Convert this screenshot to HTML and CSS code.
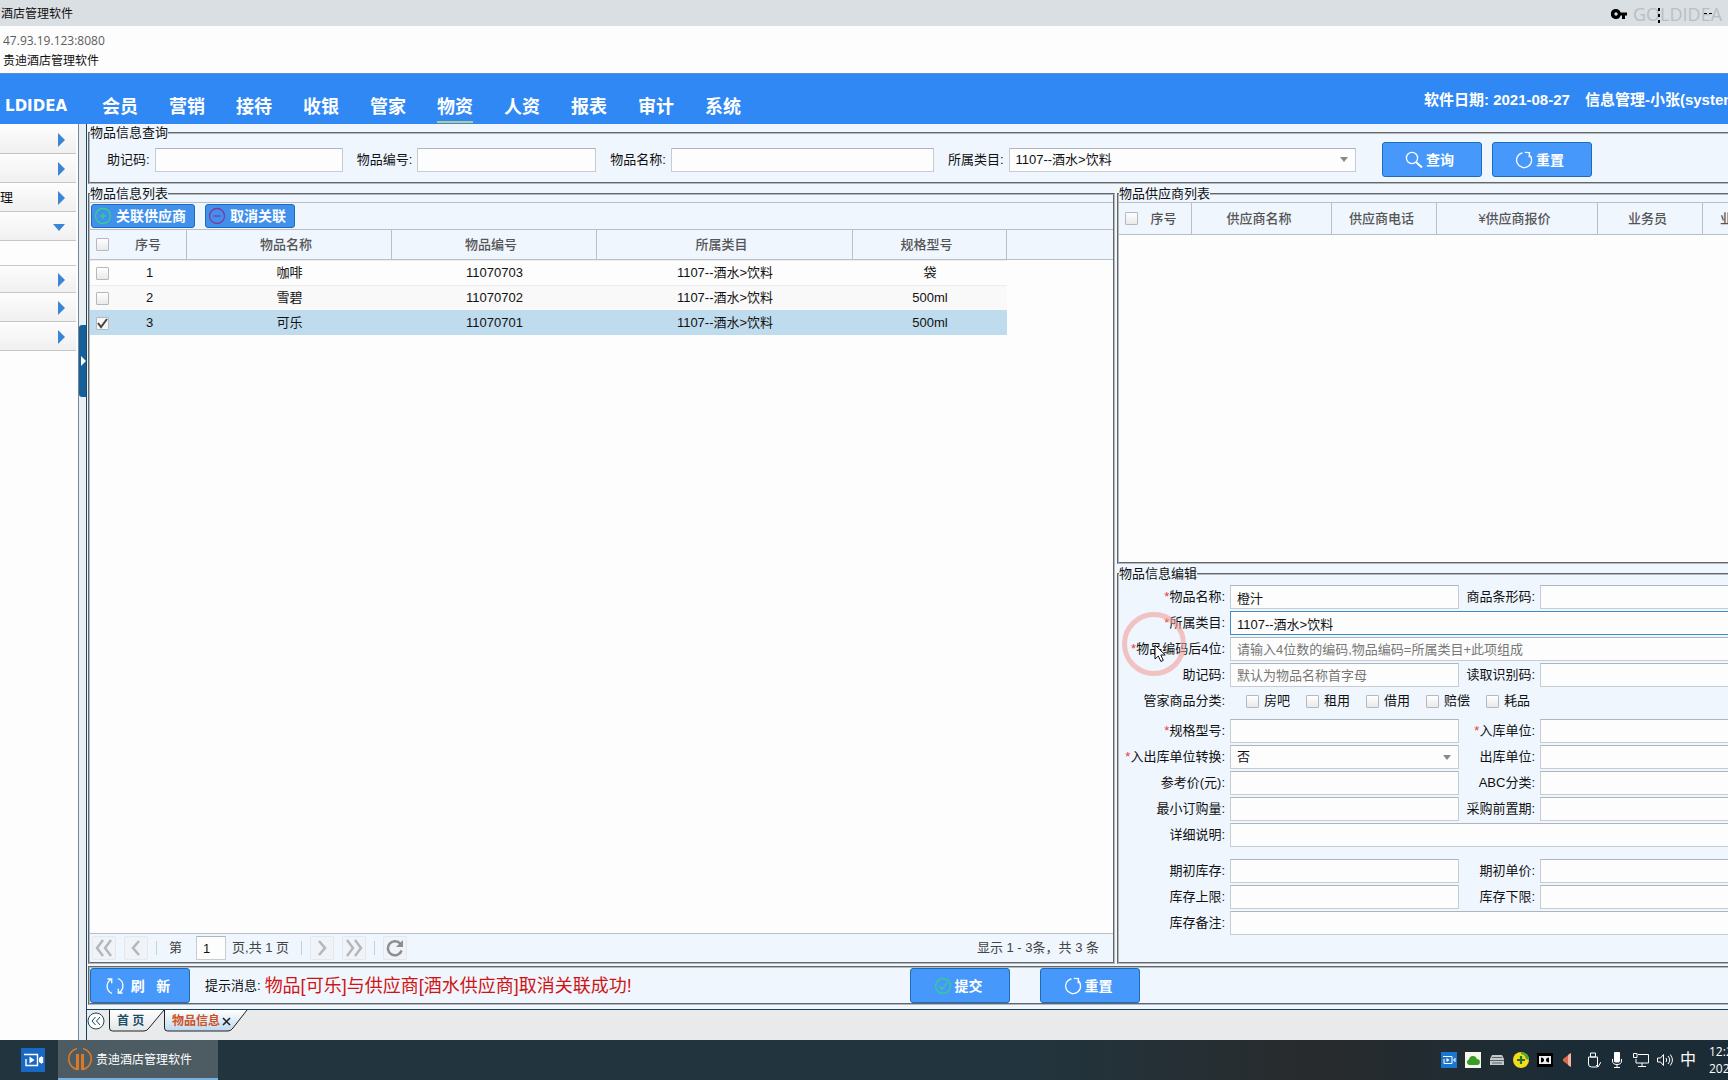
FILE: index.html
```html
<!DOCTYPE html>
<html lang="zh-CN">
<head>
<meta charset="utf-8">
<title>贵迪酒店管理软件</title>
<link rel="stylesheet" href="styles.css">
</head>
<body>
<svg class="defs" aria-hidden="true">
  <defs>
    <linearGradient id="tab-plain" x2="0" y2="1"><stop offset="0" stop-color="#fff"/><stop offset="1" stop-color="#e2e6e9"/></linearGradient>
    <linearGradient id="tab-on" x2="0" y2="1"><stop offset="0" stop-color="#fff"/><stop offset="1" stop-color="#bdd9f0"/></linearGradient>
  </defs>
  <symbol id="i-reset" viewBox="0 0 18 18"><path d="M7.500 1.800A7.500 7.500 0 1 0 13.800 3.300M9.800 1.300l4.700.2-.4 4.800" fill="none" stroke="currentColor" stroke-width="1.300"/></symbol>
</svg>

<header class="titlebar">
  <span>酒店管理软件</span>
  <div class="window-tools">
    <svg width="16" height="12" viewBox="0 0 16 12"><path fill-rule="evenodd" d="M5 1a5 5 0 1 0 4.600 6.500H11V11h3V7.500h2V4.500H9.600A5 5 0 0 0 5 1Zm0 3.300a1.700 1.700 0 1 1 0 3.400 1.700 1.700 0 0 1 0-3.400Z"/></svg>
    <div class="watermark">GOLDIDEA
      <svg class="window-marks" width="60" height="16" viewBox="0 0 60 16"><path d="M2 1h2v3H2zM2 7h2v3H2zM2 13h2v3H2zM48 6h3v1h-3zM53 6h3v1h-3z"/></svg>
    </div>
  </div>
</header>
<div class="address">
  <span class="url">47.93.19.123:8080</span>
  <span>贵迪酒店管理软件</span>
</div>
<header class="banner">
  <div class="logo">LDIDEA</div>
  <nav class="modules">
    <a href="#">会员</a><a href="#">营销</a><a href="#">接待</a><a href="#">收银</a><a href="#">管家</a><a href="#" class="on">物资</a><a href="#">人资</a><a href="#">报表</a><a href="#">审计</a><a href="#">系统</a>
  </nav>
  <div class="session"><span>软件日期: 2021-08-27</span><span>信息管理-小张(system</span></div>
</header>

<div class="app">
  <aside class="sidebar">
    <a href="#" class="item"><i class="right"></i></a>
    <a href="#" class="item"><i class="right"></i></a>
    <a href="#" class="item"><span>理</span><i class="right"></i></a>
    <a href="#" class="item"><i class="down"></i></a>
    <div class="open-panel"></div>
    <a href="#" class="item"><i class="right"></i></a>
    <a href="#" class="item"><i class="right"></i></a>
    <a href="#" class="item"><i class="right"></i></a>
  </aside>
  <div class="splitter"><button class="handle" aria-label="收起"><svg width="5" height="10" viewBox="0 0 5 10"><path d="M0 0l5 5-5 5z" fill="#fff"/></svg></button></div>

  <div class="content">
    <main class="workspace">
      <fieldset class="search">
        <legend>物品信息查询</legend>
        <div class="search-row">
          <label for="q-mnemonic">助记码:</label><input id="q-mnemonic" class="w-code" type="text">
          <label for="q-no">物品编号:</label><input id="q-no" class="w-no" type="text">
          <label for="q-name">物品名称:</label><input id="q-name" class="w-name" type="text">
          <label for="q-cat">所属类目:</label><select id="q-cat" class="w-cat"><option>1107--酒水&gt;饮料</option></select>
          <button class="btn first"><svg width="18" height="18" viewBox="0 0 18 18" fill="none" stroke="currentColor" stroke-width="1.300"><circle cx="7" cy="7" r="5.600"/><path d="M11 11l6 5.500" stroke-width="2"/></svg>查询</button>
          <button class="btn"><svg width="18" height="18"><use href="#i-reset"/></svg>重置</button>
        </div>
      </fieldset>

      <div class="panes">
        <fieldset class="list">
          <legend>物品信息列表</legend>
          <div class="pane-body">
            <div class="toolbar">
              <button class="btn small"><svg class="green" width="18" height="18" viewBox="0 0 18 18" fill="none" stroke="currentColor" stroke-width="1.300"><circle cx="9" cy="9" r="7.500"/><path d="M6 9h6M9 6v6"/></svg>关联供应商</button>
              <button class="btn small"><svg class="purple" width="18" height="18" viewBox="0 0 18 18" fill="none" stroke="currentColor" stroke-width="1.300"><circle cx="9" cy="9" r="7.500"/><path d="M5.500 9h7"/></svg>取消关联</button>
            </div>
            <table class="grid items">
              <colgroup><col class="c-check"><col class="c-seq"><col class="c-name"><col class="c-name"><col class="c-cat"><col class="c-spec"><col></colgroup>
              <thead><tr><th class="tick"><input type="checkbox" aria-label="全选"></th><th class="seq">序号</th><th>物品名称</th><th>物品编号</th><th>所属类目</th><th>规格型号</th><th class="rest"></th></tr></thead>
              <tbody>
                <tr><td class="tick"><input type="checkbox" aria-label="1"></td><td>1</td><td>咖啡</td><td>11070703</td><td>1107--酒水&gt;饮料</td><td>袋</td></tr>
                <tr class="alt"><td class="tick"><input type="checkbox" aria-label="2"></td><td>2</td><td>雪碧</td><td>11070702</td><td>1107--酒水&gt;饮料</td><td>500ml</td></tr>
                <tr class="picked"><td class="tick"><input type="checkbox" aria-label="3" checked></td><td>3</td><td>可乐</td><td>11070701</td><td>1107--酒水&gt;饮料</td><td>500ml</td></tr>
              </tbody>
            </table>
            <div class="pager">
              <button aria-label="首页"><svg width="18" height="18" viewBox="0 0 18 18"><path d="M8 1L2 9l6 8M16 1l-6 8 6 8"/></svg></button>
              <button aria-label="上一页"><svg width="18" height="18" viewBox="0 0 18 18"><path d="M12 2L6 9l6 7"/></svg></button>
              <i class="sep"></i>
              <label for="page-no">第</label><input id="page-no" type="text" value="1"><span>页,共 1 页</span>
              <i class="sep"></i>
              <button aria-label="下一页"><svg width="18" height="18" viewBox="0 0 18 18"><path d="M6 2l6 7-6 7"/></svg></button>
              <button aria-label="末页"><svg width="18" height="18" viewBox="0 0 18 18"><path d="M2 1l6 8-6 8M10 1l6 8-6 8"/></svg></button>
              <i class="sep"></i>
              <button class="reload" aria-label="刷新"><svg width="18" height="18" viewBox="0 0 18 18"><path d="M14.500 5A7 7 0 1 0 15.600 11.500"/><path class="tip" d="M17 1v7h-7z"/></svg></button>
              <span class="summary">显示 1 - 3条，共 3 条</span>
            </div>
          </div>
        </fieldset>

        <div class="side">
          <fieldset class="suppliers">
            <legend>物品供应商列表</legend>
            <div class="pane-body">
              <table class="grid supplier-table">
                <colgroup><col class="s-check"><col class="s-seq"><col class="s-name"><col class="s-tel"><col class="s-price"><col class="s-tel"><col></colgroup>
                <thead><tr><th class="tick"><input type="checkbox" aria-label="全选"></th><th>序号</th><th>供应商名称</th><th>供应商电话</th><th>¥供应商报价</th><th>业务员</th><th class="cut">业</th></tr></thead>
              </table>
            </div>
          </fieldset>

          <fieldset class="edit">
            <legend>物品信息编辑</legend>
            <div class="row"><label for="f-name"><b>*</b>物品名称:</label><input id="f-name" type="text" value="橙汁"><label for="f-bar">商品条形码:</label><input id="f-bar" class="open" type="text"></div>
            <div class="row"><label for="f-cat"><b>*</b>所属类目:</label><input id="f-cat" class="wide open active" type="text" value="1107--酒水&gt;饮料"></div>
            <div class="row"><label for="f-code"><b>*</b>物品编码后4位:</label><input id="f-code" class="wide open" type="text" placeholder="请输入4位数的编码,物品编码=所属类目+此项组成"></div>
            <div class="row"><label for="f-mn">助记码:</label><input id="f-mn" type="text" placeholder="默认为物品名称首字母"><label for="f-read">读取识别码:</label><input id="f-read" class="open" type="text"></div>
            <div class="row kinds"><span class="caption">管家商品分类:</span>
              <div class="wide checks">
                <label><input type="checkbox">房吧</label><label><input type="checkbox">租用</label><label><input type="checkbox">借用</label><label><input type="checkbox">赔偿</label><label><input type="checkbox">耗品</label>
              </div>
            </div>
            <div class="row"><label for="f-spec"><b>*</b>规格型号:</label><input id="f-spec" type="text"><label for="f-in"><b>*</b>入库单位:</label><input id="f-in" class="open" type="text"></div>
            <div class="row"><label for="f-conv"><b>*</b>入出库单位转换:</label><select id="f-conv"><option>否</option></select><label for="f-out">出库单位:</label><input id="f-out" class="open" type="text"></div>
            <div class="row"><label for="f-price">参考价(元):</label><input id="f-price" type="text"><label for="f-abc">ABC分类:</label><input id="f-abc" class="open" type="text"></div>
            <div class="row"><label for="f-min">最小订购量:</label><input id="f-min" type="text"><label for="f-lead">采购前置期:</label><input id="f-lead" class="open" type="text"></div>
            <div class="row"><label for="f-desc">详细说明:</label><input id="f-desc" class="wide open" type="text"></div>
            <div class="row stock"><label for="f-open">期初库存:</label><input id="f-open" type="text"><label for="f-unit">期初单价:</label><input id="f-unit" class="open" type="text"></div>
            <div class="row"><label for="f-max">库存上限:</label><input id="f-max" type="text"><label for="f-low">库存下限:</label><input id="f-low" class="open" type="text"></div>
            <div class="row"><label for="f-note">库存备注:</label><input id="f-note" class="wide open" type="text"></div>
            <div class="pointer">
              <svg width="66" height="66" viewBox="0 0 66 66"><circle cx="33" cy="33" r="29.500" fill="none" stroke="#f0a09a" stroke-opacity=".6" stroke-width="5"/><path d="M34 34v14l3.300-3 2.600 5.500 2.400-1.200-2.500-5.300h4.400z" fill="#fff" stroke="#111"/></svg>
            </div>
          </fieldset>
        </div>
      </div>

      <div class="actions">
        <button class="btn"><svg width="18" height="18" viewBox="0 0 18 18" fill="none" stroke="currentColor" stroke-width="1.300"><path d="M6 16.500A7.800 7.800 0 0 1 5 2.500M1.500 2h4.200v4.300M12 1.500a7.800 7.800 0 0 1 1 14M16.500 16h-4.200v-4.300"/></svg><span class="refresh">刷&nbsp; &nbsp;新</span></button>
        <p class="message">提示消息: <strong>物品[可乐]与供应商[酒水供应商]取消关联成功!</strong></p>
        <button class="btn"><svg class="green" width="18" height="18" viewBox="0 0 18 18" fill="none" stroke="currentColor" stroke-width="1.300"><circle cx="9" cy="9" r="7.500"/><path d="M5 9l3 3.200L13 6"/></svg>提交</button>
        <button class="btn"><svg width="18" height="18"><use href="#i-reset"/></svg>重置</button>
      </div>
    </main>

    <nav class="tabs">
      <button class="back" aria-label="向左"><svg width="18" height="18" viewBox="0 0 18 18" fill="none" stroke="#1d4459"><circle cx="9" cy="9" r="8" fill="#fff"/><path d="M8.500 5L5 9l3.500 4M13 5L9.500 9l3.500 4"/></svg></button>
      <a href="#" class="tab home"><svg width="56" height="22" viewBox="0 0 56 22"><path d="M.5 0v18q0 3 3 3H35q3 0 5-3L55 0" fill="url(#tab-plain)" stroke="#222"/></svg><span>首 页</span></a>
      <a href="#" class="tab current"><svg width="84" height="22" viewBox="0 0 84 22"><path d="M.5 0v18q0 3 3 3H64q3 0 5-3L83 0" fill="url(#tab-on)" stroke="#222"/></svg><span>物品信息</span><svg class="close" width="9" height="9" viewBox="0 0 9 9"><path d="M1 1l7 7M8 1L1 8" stroke="#222" stroke-width="1.600"/></svg></a>
    </nav>
  </div>
</div>

<footer class="taskbar">
  <div class="pinned"><svg width="24" height="24" viewBox="0 0 24 24"><rect width="24" height="24" rx="1" fill="#1769c4"/><g fill="none" stroke="#fff" stroke-width="1.400"><path d="M3 6.500h13.500v11H5V11"/><path d="M21.500 9v6"/></g><path d="M8.500 8.500l5 3.500-5 3.500zM18 10l3-2v8l-3-2z" fill="#fff"/></svg></div>
  <div class="running"><svg width="24" height="24" viewBox="0 0 24 24" fill="none" stroke="#d87a2a"><path d="M9 1.500A10.800 10.800 0 0 0 9 22.500M15 1.500A10.800 10.800 0 0 1 15 22.500" stroke-width="1.600"/><path d="M9.500 7v16M14.500 7v16" stroke-width="3"/></svg><span>贵迪酒店管理软件</span></div>
  <div class="tray">
    <svg viewBox="0 0 16 16"><path fill="#1b76cf" d="M0 0h16v16H0z"/><path d="M2 4.500h9v7H3V7M14 6v4M12 8h2" fill="none" stroke="#fff"/><path d="M5.500 6l3 2-3 2z" fill="#fff"/></svg>
    <svg viewBox="0 0 16 16"><path fill="#f3f7ec" d="M0 0h16v16H0z"/><path d="M4.500 13a2.800 2.800 0 0 1-.5-5.500 4 4 0 0 1 7.800-.5A3 3 0 0 1 12 13z" fill="#3a9c26"/></svg>
    <svg viewBox="0 0 16 16"><path d="M3 3h10l2 4v6H1V7z" fill="#c4c8ca"/><path d="M3 5.500h10M1 8.500h14M3 11h10" stroke="#59646a"/></svg>
    <svg viewBox="0 0 16 16"><circle cx="8" cy="8" r="8" fill="#f2dc1d"/><path d="M8 0a8 8 0 0 1 8 8l-3-1a6 6 0 0 0-5-5z" fill="#4ba62f"/><path d="M8 4v8M4 8h8" stroke="#23702a" stroke-width="2.200"/></svg>
    <svg viewBox="0 0 16 16"><path d="M0 1h16v14H0z"/><path d="M2 4h12v8H2z" fill="#eee"/><path d="M4 5.500c4 0 4 5 0 5zM12 5.500c-4 0-4 5 0 5z"/></svg>
    <svg viewBox="0 0 16 16"><path d="M2 7l8-6v14L2 9z" fill="#d96a50"/><path d="M7 3l3-2v14l-3-2z" fill="#f3b5a2"/></svg>
    <svg viewBox="0 0 16 16" class="line"><path d="M5.500 1h5v4h-5zM3.500 5h9v10h-6q-3 0-3-3zM11 13l2 2 3-5"/></svg>
    <svg viewBox="0 0 16 16" class="line"><rect x="5.500" y="0" width="5" height="10" rx="1" fill="#fff"/><path d="M3.500 7v2q0 3.500 4.500 3.500T12.500 9V7M8 12v3.500M5 15.500h6"/></svg>
    <svg viewBox="0 0 16 16" class="line"><path d="M5 2.500h10.500v8.500H3V7M.5 1.500h3.500v4H.5zM9 11v3.500M5 14.500h8"/></svg>
    <svg viewBox="0 0 16 16" class="line"><path d="M.5 6h3l3-3.500v11L3.500 10h-3zM9 6q1.500 2 0 4M11 4q3.500 4 0 8M13.200 2.500q4.500 5.500 0 11"/></svg>
    <span class="ime">中</span>
    <div class="clock"><span>12:2</span><span>202</span></div>
  </div>
</footer>
</body>
</html>
```
FILE: styles.css
```css
* { box-sizing: border-box; }
body {
  margin: 0;
  min-height: 100vh;
  display: flex;
  flex-direction: column;
  overflow: hidden;
  background: #fdfdfd;
  color: #111;
  font: 13px/18px "Liberation Sans", "Noto Sans CJK SC", sans-serif;
}
a { color: inherit; text-decoration: none; }
button, input, select { font: inherit; color: inherit; margin: 0; }
svg { flex: none; display: block; }
.defs { position: absolute; width: 0; height: 0; }

/* browser chrome */
.titlebar {
  height: 26px;
  padding: 1px 0 0 1px;
  background: #dadfe3;
  display: flex;
  align-items: center;
  justify-content: space-between;
  font-size: 12px;
}
.window-tools { display: flex; align-items: center; gap: 6px; width: 117px; white-space: nowrap; overflow: hidden; }
.watermark { position: relative; color: #b9bec2; font: 18px/24px "Open Sans", "Noto Sans", sans-serif; }
.window-marks { position: absolute; left: 23px; top: 5px; }
.address {
  height: 47px;
  padding: 6px 3px;
  display: flex;
  flex-direction: column;
  gap: 2px;
  font-size: 12px;
}
.url { color: #5c5c5c; font-family: "Open Sans", sans-serif; }

/* blue banner */
.banner {
  height: 51px;
  background: #3088f5;
  border-top: 1px solid #4f93d6;
  color: #fff;
  display: flex;
  font-weight: bold;
}
.logo { width: 67px; padding-top: 19px; text-align: right; font: bold 15px/26px "DejaVu Sans", sans-serif; }
.modules { display: flex; gap: 31px; margin: 19px 0 0 35px; font-size: 18px; line-height: 29px; }
.modules a { height: 30px; white-space: nowrap; }
.modules .on { border-bottom: 2px solid #b9c98a; }
.session { margin-left: auto; width: 304px; display: flex; gap: 15px; padding-top: 16px; font-size: 15px; line-height: 20px; white-space: nowrap; overflow: hidden; }

/* sidebar and splitter */
.app { flex: 1; display: flex; min-height: 0; }
.sidebar { width: 76px; flex: none; padding-top: 1px; }
.item {
  height: 29px;
  padding: 2px 11px 0 0;
  border-bottom: 1px solid #c6c6c6;
  background: linear-gradient(#fdfdfd, #f0f0f0);
  display: flex;
  align-items: center;
  font-size: 13px;
}
.item i { margin-left: auto; }
.item .right { border: solid transparent; border-width: 7px 0 7px 7px; border-left-color: #3a85d8; }
.item .down { border: solid transparent; border-width: 7px 6px 0; border-top-color: #3a85d8; }
.open-panel { height: 25px; border-bottom: 1px solid #c6c6c6; }
.open-panel + .item { height: 27px; }
.splitter {
  width: 9px;
  flex: none;
  margin-left: 2px;
  border-left: 1px solid #73879a;
  border-right: 1px solid #1d4459;
  background: #e9eef3;
  padding-top: 201px;
}
.handle { display: flex; align-items: center; width: 7px; height: 72px; padding: 0 0 0 2px; border: 0; border-radius: 3px 0 0 3px; background: #15609a; }

/* shared controls */
.content { flex: 1; min-width: 0; display: flex; flex-direction: column; background: #e9eaeb; }
.workspace { flex: 1; display: flex; flex-direction: column; padding: 0 0 4px 1px; background: #eff6fe; border-bottom: 1px solid #1d4459; }
fieldset { margin: 0; padding: 0; min-width: 0; border: 2px groove #b4b9bd; }
legend { padding: 0; line-height: 17px; height: 17px; }
input[type="text"], select {
  height: 24px;
  padding: 0 6px;
  border: 1px solid #c5ccd2;
  border-top-color: #aeb6bd;
  border-radius: 0;
  background: #fdfdfd;
  appearance: none;
  outline: 0;
  min-width: 0;
}
select {
  background: #fdfdfd url("data:image/svg+xml,%3Csvg xmlns='http://www.w3.org/2000/svg' width='8' height='5'%3E%3Cpath d='M0 0h8L4 5z' fill='%23888'/%3E%3C/svg%3E") no-repeat right 7px center;
}
input::placeholder { color: #777; opacity: 1; }
input[type="checkbox"] {
  appearance: none;
  display: block;
  flex: none;
  width: 13px;
  height: 13px;
  border: 1px solid #b5b9bd;
  border-radius: 1px;
  background: linear-gradient(#fff, #e9e9e9);
}
input[type="checkbox"]:checked {
  background: #f6f6f6 url("data:image/svg+xml,%3Csvg xmlns='http://www.w3.org/2000/svg' width='11' height='11'%3E%3Cpath d='M1 5l3 4 6-8' fill='none' stroke='%23444' stroke-width='2'/%3E%3C/svg%3E") no-repeat center;
}
.btn {
  width: 100px;
  height: 35px;
  padding: 0 4px 0 0;
  display: flex;
  align-items: center;
  justify-content: center;
  gap: 3px;
  flex: none;
  border: 1px solid #1c6cb8;
  border-radius: 3px;
  background: #4698fb;
  color: #fff;
  font-size: 14px;
  font-weight: bold;
  white-space: nowrap;
}
.btn.small { width: auto; height: 24px; padding: 0 8px 0 2px; gap: 4px; background: #4191ec; }
.green { color: #35cf8d; }
.purple { color: #85359b; }

/* search */
.search { border-right: 0; }
.search-row { display: flex; align-items: center; padding: 1px 0 5px 17px; white-space: nowrap; }
.search-row label { margin-right: 5px; }
.search-row input, .search-row .w-cat { margin-right: 14px; }
.search-row .w-code { width: 188px; }
.search-row .w-no { width: 179px; }
.search-row .w-name { width: 263px; }
.search-row .w-cat { width: 347px; margin-right: 26px; }
.search-row .btn.first { margin-right: 10px; }

/* panes */
.panes { flex: 1; display: grid; grid-template-columns: minmax(0, 1027fr) minmax(0, 611fr); gap: 2px; margin: 1px 0 2px; }
.list { display: flex; flex-direction: column; }
.pane-body { flex: 1; display: flex; flex-direction: column; background: #fdfdfd; border-top: 1px solid #b9bfc5; }
.toolbar { height: 27px; padding: 1px; display: flex; gap: 10px; background: #eff6fe; border-bottom: 1px solid #b9bfc5; }
.grid { table-layout: fixed; border-collapse: separate; border-spacing: 0; width: 100%; text-align: center; }
.grid th { height: 30px; padding: 0 6px 0 0; font-weight: 500; color: #555; background: #eff6fe; border: solid #b9bfc5; border-width: 0 1px 1px 0; white-space: nowrap; overflow: hidden; }
.grid .tick { padding: 0 0 0 6px; border-right: 0; }
.grid .seq { padding-right: 2px; }
.grid .rest { border-right: 0; }
.grid td { height: 25px; padding: 0; border-top: 1px solid #ededed; }
.grid .alt td { background: #f9f9f9; }
.grid .picked td { background: #bfdcee; border-color: #bfdcee; }
.c-check { width: 22px; }
.c-seq { width: 75px; }
.c-name { width: 205px; }
.c-cat { width: 256px; }
.c-spec { width: 154px; }
.s-check { width: 22px; }
.s-seq { width: 51px; }
.s-name { width: 140px; }
.s-tel { width: 105px; }
.s-price { width: 161px; }
.supplier-table th { height: 32px; padding: 0 5px 0 0; }
.supplier-table .tick { padding: 0 0 0 6px; }
.supplier-table .cut { padding: 0 0 0 17px; text-align: left; border-right: 0; text-overflow: clip; }

.pager { margin-top: auto; height: 29px; padding: 0 14px 0 2px; display: flex; align-items: center; background: #eff6fe; border-top: 1px solid #b9bfc5; color: #444; white-space: nowrap; }
.pager button { width: 24px; height: 24px; margin-right: 8px; padding: 2px; border: 1px solid #e4e8ec; border-radius: 2px; background: #f0f4f8; }
.pager path { fill: none; stroke: #b3b7bb; stroke-width: 2.5px; }
.pager .sep { width: 1px; height: 14px; margin-right: 8px; background: #c9ced3; }
.pager label { margin: 0 14px 0 4px; }
.pager input { width: 30px; margin-right: 6px; color: #111; }
.pager span { margin-right: 12px; }
.pager .reload path { stroke: #8b8f93; }
.pager .reload .tip { fill: #8b8f93; stroke: none; }
.pager .summary { margin: 0 0 0 auto; }

/* right column */
.side { display: flex; flex-direction: column; gap: 1px; }
.suppliers { flex: 1; display: flex; flex-direction: column; border-right: 0; }
.edit { position: relative; padding: 3px 0 25px; border-right: 0; }
.row { display: grid; grid-template-columns: 111px 229px 81px minmax(0, 1fr); height: 24px; margin-bottom: 2px; align-items: center; }
.row > label, .caption { padding-right: 5px; text-align: right; white-space: nowrap; }
.row b { color: #e04040; font-weight: normal; }
.wide { grid-column: 2 / -1; }
.row .open { border-right: 0; }
.row .active { border-color: #3f8bc4; }
.kinds { height: 28px; padding-bottom: 4px; }
.checks { display: flex; padding-left: 16px; gap: 16px; }
.checks label { display: flex; align-items: center; gap: 5px; width: 44px; white-space: nowrap; }
.stock { margin-top: 12px; }
.pointer { position: absolute; left: 2px; top: 29px; pointer-events: none; }

/* bottom bar and tabs */
.actions { display: flex; align-items: center; border: 2px groove #b4b9bd; border-right: 0; }
.actions .btn + .btn { margin-left: 30px; }
.refresh { margin-left: 4px; }
.message { width: 720px; margin: 0; padding-left: 15px; display: flex; align-items: center; gap: 4px; white-space: nowrap; }
.message strong { color: #d01414; font-size: 18px; line-height: 24px; font-weight: normal; }
.tabs { height: 30px; display: flex; align-items: flex-start; font-size: 12px; font-weight: bold; }
.back { margin: 2px 4px 0 0; padding: 0; border: 0; background: none; }
.tab { position: relative; height: 22px; line-height: 20px; padding-left: 8px; display: flex; align-items: center; gap: 2px; white-space: nowrap; }
.tab > svg:first-child { position: absolute; left: 0; top: 0; }
.tab > span, .close { position: relative; }
.home { width: 55px; color: #1d4f66; }
.current { width: 84px; color: #d0501e; }

/* taskbar */
.taskbar { height: 40px; display: flex; background: linear-gradient(90deg, #22343d 0, #22343d 60%, #282b2d 76%, #1c2c36 90%); color: #fff; font-size: 12px; }
.pinned { width: 58px; padding: 8px 0 0 21px; }
.running { width: 160px; padding-left: 10px; display: flex; align-items: center; gap: 4px; background: #4d5c63; border-bottom: 2px solid #76b2e0; }
.running span { white-space: nowrap; padding-top: 2px; }
.tray { margin-left: auto; display: flex; align-items: center; }
.tray svg { width: 16px; height: 16px; margin: 0 4px; }
.tray .line { fill: none; stroke: #fff; }
.ime { width: 22px; text-align: center; font-size: 16px; }
.clock { width: 29px; padding-left: 10px; display: flex; flex-direction: column; overflow: hidden; font: 12px/17px "Open Sans", sans-serif; }
```
